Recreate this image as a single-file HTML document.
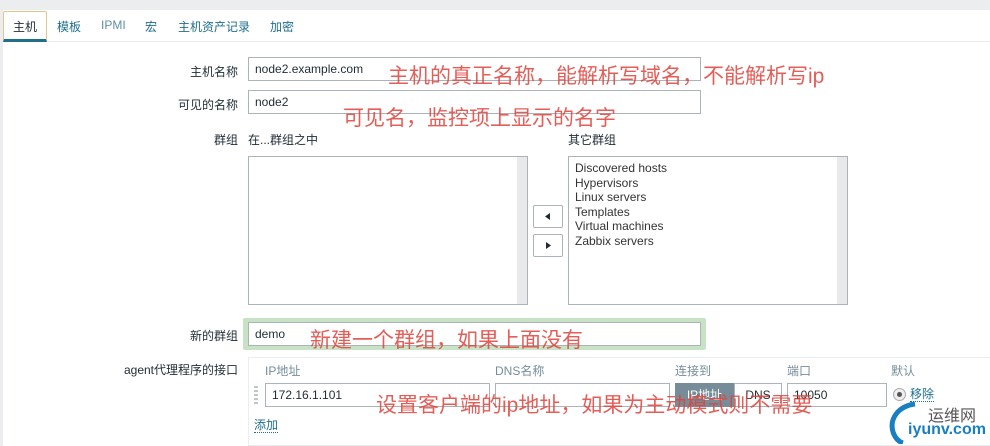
<!DOCTYPE html>
<html><head><meta charset="utf-8"><style>
*{box-sizing:border-box;margin:0;padding:0}
body{width:990px;height:446px;overflow:hidden;background:#fff;font-family:"Liberation Sans","Noto Sans CJK SC",sans-serif;font-size:12px;color:#1f2c33;position:relative}
.a{position:absolute}
.inp{position:absolute;border:1px solid #acb4b9;background:#fff;height:24px;padding:3px 6px;font-size:12px;line-height:16px;color:#1f2c33}
.lbl{position:absolute;text-align:right;width:238px;left:0;font-size:12px}
.red{position:absolute;color:#e0433c;font-size:21px;line-height:24px;font-family:"Liberation Sans","Noto Sans CJK SC",sans-serif;white-space:nowrap;opacity:.85}
.tab{position:absolute;top:18px;color:#1f6e8c;font-size:12px}
.list{position:absolute;border:1px solid #acb4b9;background:#fff}
.list .sb{position:absolute;right:0;top:0;bottom:0;width:10px;background:#e8e9ea}
.btn{position:absolute;left:533px;width:30px;height:23px;border:1px solid #acb4b9;background:#fff;border-radius:2px}
.hdr{position:absolute;top:362px;color:#768d99;font-size:12px}
</style></head><body>
<div class="a" style="left:0;top:0;width:990px;height:10px;background:#ebedef"></div>
<div class="a" style="left:0;top:10px;width:3px;height:436px;background:#ebedef"></div>
<div class="a" style="left:3px;top:41px;width:987px;height:1px;background:#ebeef0"></div>
<div class="a" style="left:3px;top:11px;width:44px;height:31px;border:1px solid #e4c58c;border-bottom:3px solid #1f6e8c;border-radius:2px 2px 0 0;background:#fff"></div>
<div class="tab" style="left:13px;color:#1f2c33">主机</div>
<div class="tab" style="left:57px">模板</div>
<div class="tab" style="left:101px;color:#5f8fa8">IPMI</div>
<div class="tab" style="left:145px">宏</div>
<div class="tab" style="left:178px">主机资产记录</div>
<div class="tab" style="left:270px">加密</div>

<div class="lbl" style="top:63px">主机名称</div>
<div class="inp" style="left:248px;top:57px;width:453px">node2.example.com</div>
<div class="lbl" style="top:96px">可见的名称</div>
<div class="inp" style="left:248px;top:90px;width:453px">node2</div>
<div class="lbl" style="top:131px">群组</div>
<div class="a" style="left:248px;top:131px">在...群组之中</div>
<div class="a" style="left:568px;top:131px">其它群组</div>
<div class="list" style="left:248px;top:156px;width:280px;height:149px"><div class="sb"></div></div>
<div class="list" style="left:568px;top:156px;width:280px;height:149px;padding:4px 6px;line-height:14.5px;color:#333"><div class="sb"></div>Discovered hosts<br>Hypervisors<br>Linux servers<br>Templates<br>Virtual machines<br>Zabbix servers</div>
<div class="btn" style="top:205px"><svg width="28" height="21" style="position:absolute;left:0;top:0"><path d="M11 10.5L16 7V14Z" fill="#1f2c33"/></svg></div>
<div class="btn" style="top:234px"><svg width="28" height="21" style="position:absolute;left:0;top:0"><path d="M17 10.5L12 7V14Z" fill="#1f2c33"/></svg></div>

<div class="lbl" style="top:327px">新的群组</div>
<div class="a" style="left:243px;top:318px;width:463px;height:32px;background:#c8e2c6;border-radius:2px"></div>
<div class="inp" style="left:248px;top:322px;width:453px">demo</div>

<div class="lbl" style="top:361px">agent代理程序的接口</div>
<div class="a" style="left:248px;top:357px;width:742px;height:89px;border:1px solid #ebeef0;border-right:none"></div>
<div class="hdr" style="left:265px">IP地址</div>
<div class="hdr" style="left:495px">DNS名称</div>
<div class="hdr" style="left:675px">连接到</div>
<div class="hdr" style="left:787px">端口</div>
<div class="hdr" style="left:891px">默认</div>
<div class="a" style="left:254px;top:386px;width:4px;height:18px;border-left:2px dotted #c0c6ca;border-right:2px dotted #c0c6ca"></div>
<div class="inp" style="left:265px;top:383px;width:225px">172.16.1.101</div>
<div class="inp" style="left:495px;top:383px;width:175px"></div>
<div class="a" style="left:675px;top:383px;width:59px;height:24px;background:#768d99;color:#fff;text-align:center;line-height:24px">IP地址</div>
<div class="a" style="left:734px;top:383px;width:48px;height:24px;border:1px solid #acb4b9;text-align:center;line-height:22px">DNS</div>
<div class="inp" style="left:787px;top:383px;width:100px">10050</div>
<div class="a" style="left:893px;top:388px;width:13px;height:13px;border-radius:50%;border:1px solid #aaa;background:#eee"><div class="a" style="left:3px;top:3px;width:5px;height:5px;border-radius:50%;background:#555"></div></div>
<div class="a" style="left:910px;top:387px;color:#1f6e8c;border-bottom:1px dotted #1f6e8c;line-height:14px">移除</div>
<div class="a" style="left:254px;top:418px;color:#1f6e8c;border-bottom:1px dotted #1f6e8c;line-height:14px">添加</div>

<div class="red" style="left:388px;top:65px">主机的真正名称，能解析写域名，不能解析写ip</div>
<div class="red" style="left:343px;top:107px">可见名，监控项上显示的名字</div>
<div class="red" style="left:310px;top:329px">新建一个群组，如果上面没有</div>
<div class="red" style="left:376px;top:394px">设置客户端的ip地址，如果为主动模式则不需要</div>

<svg class="a" style="left:885px;top:400px" width="40" height="44"><path d="M30 4C14 6 4 18 8 32C10 38 14 42 18 43" stroke="#1a7fc0" stroke-width="5" fill="none"/></svg>
<div class="a" style="left:928px;top:402px;font-size:16px;color:#555">运维网</div>
<div class="a" style="left:908px;top:421px;font-size:16px;font-weight:bold;color:#1a7fc0">iyunv.com</div>
</body></html>
